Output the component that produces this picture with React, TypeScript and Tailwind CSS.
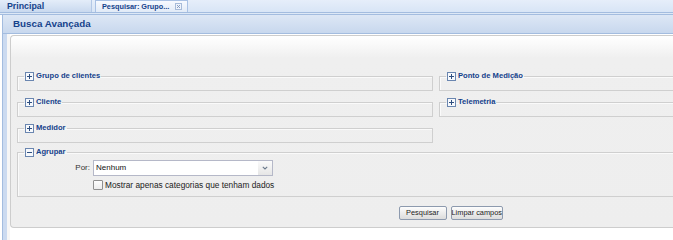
import React from "react";

const PlusBox = ({ minus = false }: { minus?: boolean }) => (
  <svg width="9" height="9" viewBox="0 0 9 9" className="shrink-0">
    <rect x="0.5" y="0.5" width="8" height="8" fill="#f7f9fc" stroke="#6a86b0" />
    <line x1="2" y1="4.5" x2="7" y2="4.5" stroke="#2f4f80" />
    {!minus && <line x1="4.5" y1="2" x2="4.5" y2="7" stroke="#2f4f80" />}
  </svg>
);

const Field = ({ title, minus = false, children, className = "" }: { title: string; minus?: boolean; children?: React.ReactNode; className?: string }) => (
  <fieldset className={"border border-[#cfcfcf] shadow-[inset_1px_1px_0_#fafafa] " + className}>
    <legend className="ml-[6px] px-[1px] flex items-center gap-[2px] h-[10px] leading-[10px] text-[7.6px] font-bold text-[#15428b] whitespace-nowrap">
      <PlusBox minus={minus} />
      <span>{title}</span>
    </legend>
    {children ?? <div className="h-[9px]" />}
  </fieldset>
);

export default function App() {
  return (
    <div className="w-[673px] h-[240px] overflow-hidden bg-white font-['Liberation_Sans',Arial,sans-serif]">
      {/* tab strip */}
      <div className="h-[12px] flex items-end gap-[3px] bg-gradient-to-b from-[#e6eefa] to-[#d8e5f6]">
        <div className="w-[92px] shrink-0 h-[12px] flex items-center pl-[7px] border-r border-[#b3c8e6] bg-gradient-to-b from-[#e4edf9] to-[#c9d9ef] text-[8.8px] font-bold text-[#15428b] leading-none whitespace-nowrap">
          Principal
        </div>
        <div className="w-[93px] shrink-0 h-[12px] flex items-center pl-[6px] pr-[3px] border-x border-t border-[#a9c1e4] bg-gradient-to-b from-[#f7faff] to-[#e1eaf7] text-[7.3px] font-bold text-[#15428b] leading-none whitespace-nowrap">
          <span className="flex-1">Pesquisar: Grupo...</span>
          <svg width="7" height="7" viewBox="0 0 7 7" className="mr-[2px] shrink-0">
            <rect x="0.5" y="0.5" width="6" height="6" fill="#eef3fb" stroke="#a7bbd9" />
            <path d="M2 2 L5 5 M5 2 L2 5" stroke="#7d95bd" strokeWidth="0.9" />
          </svg>
        </div>
      </div>
      <div className="h-[3px] border-y border-[#a3bcdf] bg-[#dde8f6]" />

      <div className="h-[225px] flex flex-col ml-[2px]">
        {/* header */}
        <div className="h-[19px] shrink-0 flex items-center pl-[10px] border-l border-b border-[#a3bcdf] bg-gradient-to-b from-[#dde7f5] to-[#c8d8ee] text-[9.8px] font-bold text-[#15428b] leading-none">
          Busca Avançada
        </div>
        {/* body */}
        <div className="flex-1 flex">
          <div className="w-[1px] shrink-0 bg-[#a3bcdf]" />
          <div className="w-[4px] shrink-0 bg-[#cbdaf0]" />
          <div className="w-[3px] shrink-0 bg-[#f6f6f6]" />
          <div className="flex-1 min-w-0 pt-[1px]">
            <div className="w-[880px] h-[193px] border border-r-0 border-[#cdcdcd] rounded-l-[4px] bg-[linear-gradient(to_bottom,#ffffff_0px,#f8f8f8_10px,#efefef_22px,#eeeeee_100%)] pl-[6px] pt-[35px]">
              <div className="grid grid-cols-[416px_1fr] gap-x-[6px] gap-y-[6px] pr-[10px]">
                <Field title="Grupo de clientes" />
                <Field title="Ponto de Medição" />
                <Field title="Cliente" />
                <Field title="Telemetria" />
                <Field title="Medidor" />
                <div />
              </div>
              <Field title="Agrupar" minus className="mt-[4px] mr-[10px]">
                <div className="pt-[3px] pb-[6px] pl-[56px]">
                  <div className="flex items-center h-[16px]">
                    <span className="w-[16px] text-right text-[8px] text-[#333] leading-none">Por:</span>
                    <div className="ml-[3px] w-[180px] h-[16px] flex border border-[#b5b8c8] bg-white">
                      <span className="flex-1 pl-[2px] flex items-center text-[8px] text-[#111] leading-none">Nenhum</span>
                      <div className="w-[14px] flex items-center justify-center bg-gradient-to-b from-[#fbfbfb] to-[#e6e6e6]">
                        <svg width="6" height="4" viewBox="0 0 6 4">
                          <path d="M0.8 0.8 L3 3 L5.2 0.8" fill="none" stroke="#6b7a8c" strokeWidth="1.1" />
                        </svg>
                      </div>
                    </div>
                  </div>
                  <div className="mt-[4px] ml-[19px] flex items-center h-[10px] gap-[2px]">
                    <div className="w-[10px] h-[10px] border border-[#8f8f8f] rounded-[1px] bg-gradient-to-b from-[#fdfdfd] to-[#ececec]" />
                    <span className="text-[8.3px] text-[#222] leading-none whitespace-nowrap">Mostrar apenas categorias que tenham dados</span>
                  </div>
                </div>
              </Field>
              <div className="mt-[9px] flex justify-center gap-[4px] pr-[6px]">
                <button className="w-[48px] h-[14px] border border-[#8d9aae] rounded-[2px] bg-gradient-to-b from-[#fdfdfd] to-[#dcdcdc] text-[7.4px] text-[#222] leading-none whitespace-nowrap px-0">
                  Pesquisar
                </button>
                <button className="w-[52px] h-[14px] border border-[#8d9aae] rounded-[2px] bg-gradient-to-b from-[#fdfdfd] to-[#dcdcdc] text-[7.4px] text-[#222] leading-none whitespace-nowrap px-0">
                  Limpar campos
                </button>
              </div>
            </div>
          </div>
        </div>
      </div>
    </div>
  );
}
